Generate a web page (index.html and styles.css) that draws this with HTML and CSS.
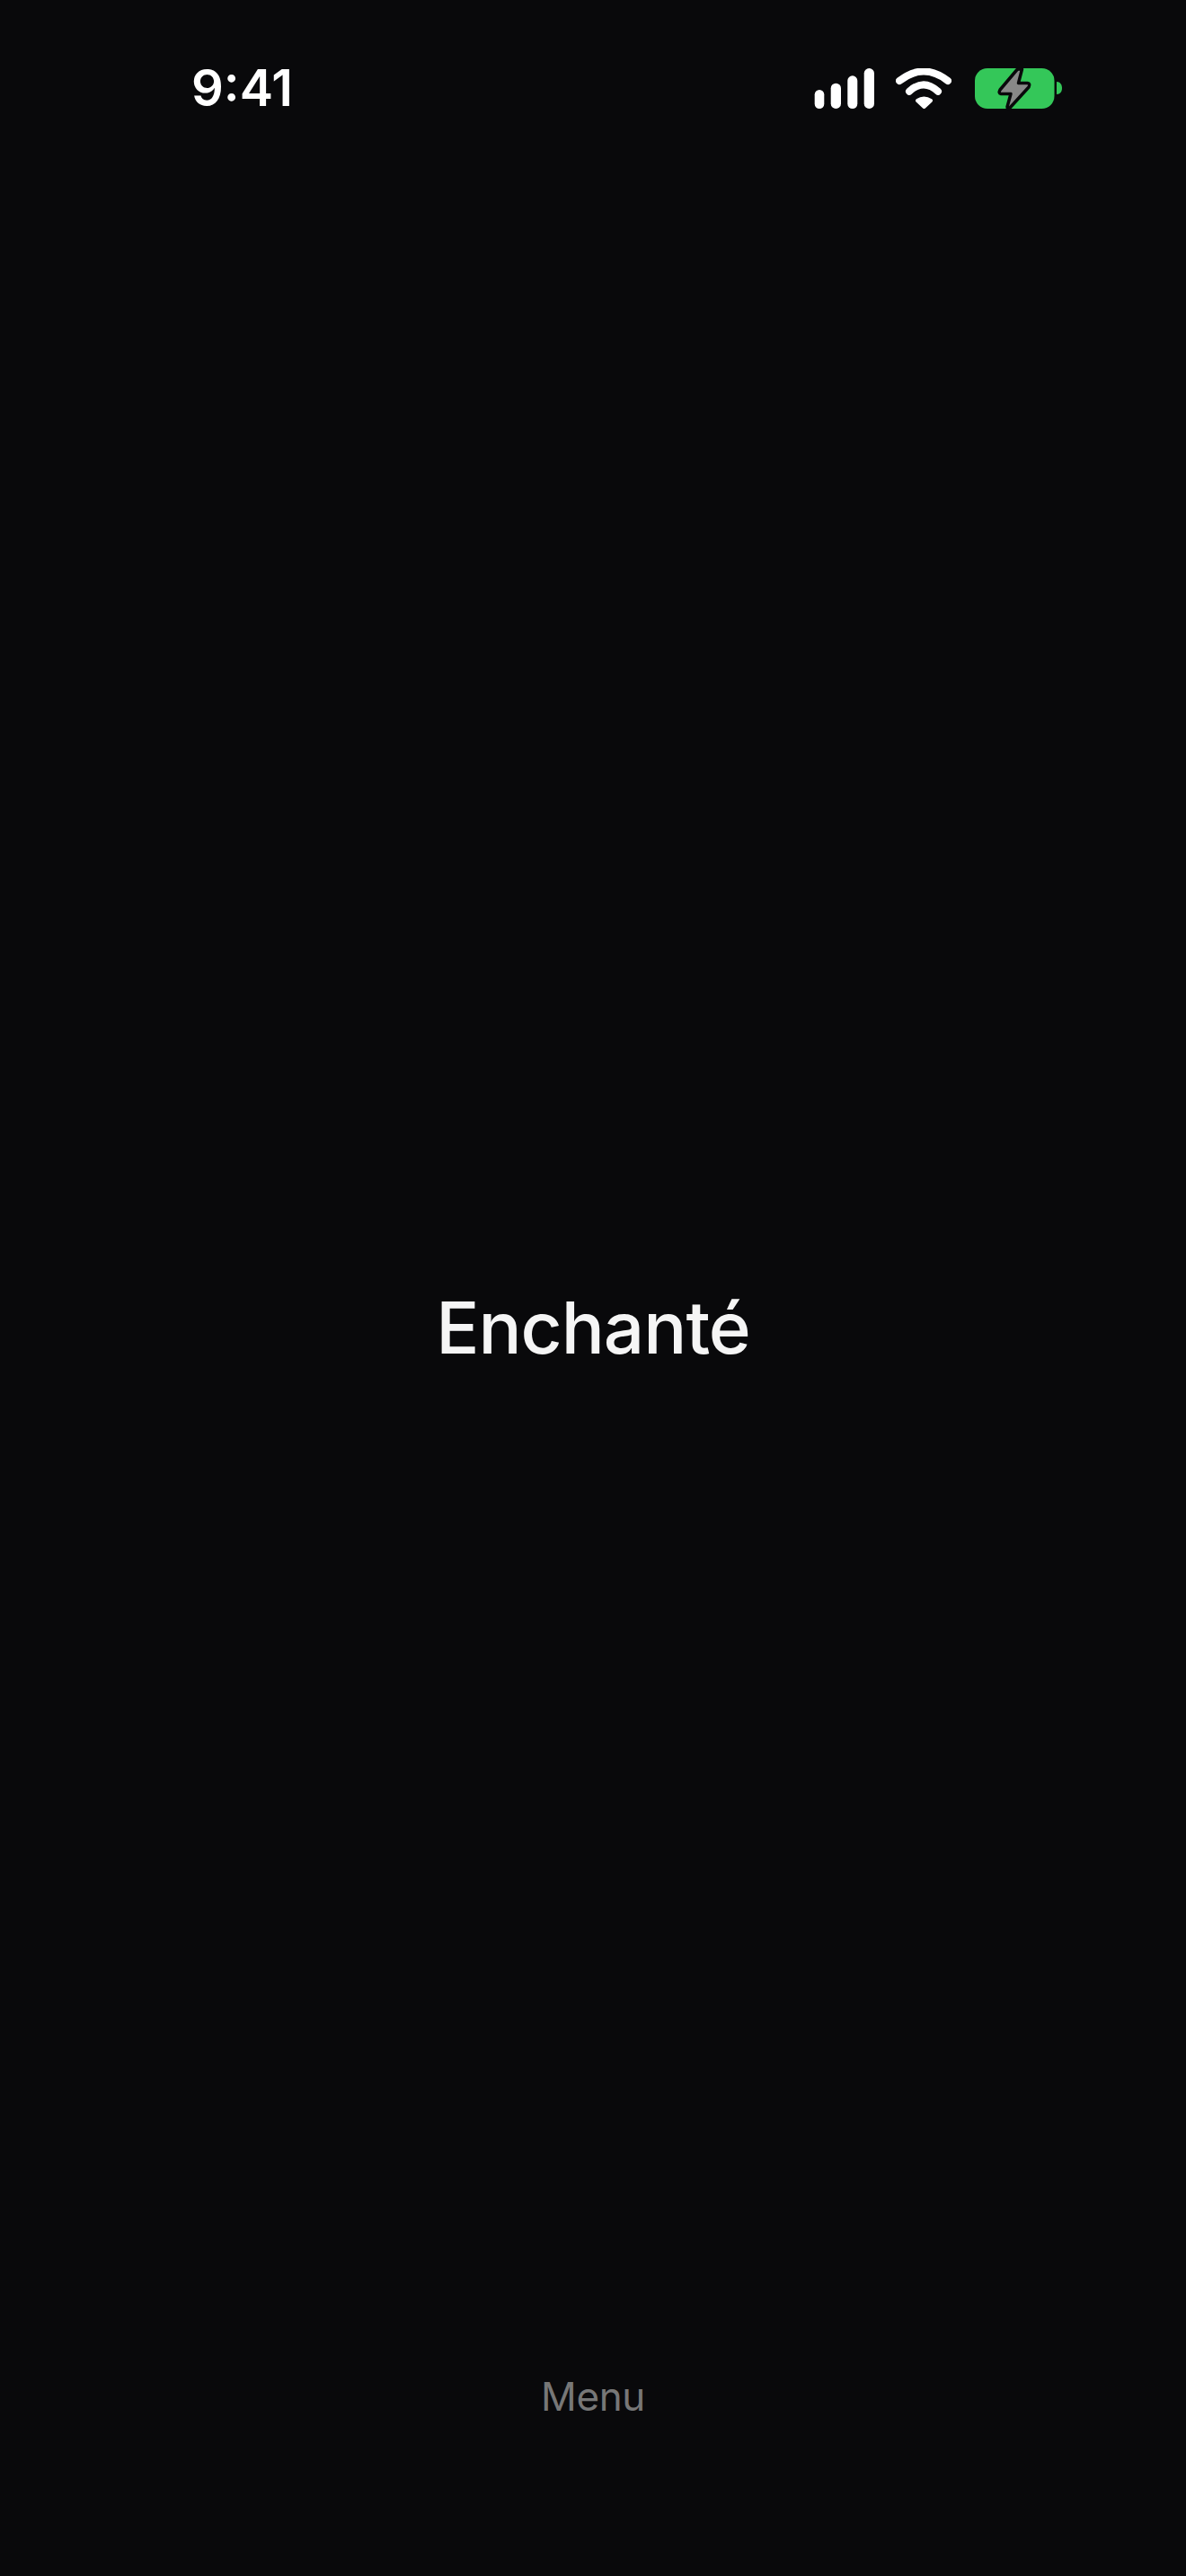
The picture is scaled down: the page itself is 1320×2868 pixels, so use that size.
FILE: index.html
```html
<!DOCTYPE html>
<html lang="en">

<head>
  <meta charset="UTF-8" />
  <meta name="viewport" content="width=device-width, initial-scale=1.0" />
  <title>Enchanté</title>
  <link rel="stylesheet" href="styles.css">
</head>

<body>
  <div class="screen">
    <div class="status-bar">
      <span class="time">9:41</span>
      <div class="status-icons">
        <svg class="icon-signal" width="67" height="45" viewBox="0 0 67 45">
          <rect x="0.7" y="24" width="10.6" height="21" rx="5.3" />
          <rect x="18.7" y="16.7" width="11.3" height="28.3" rx="5.6" />
          <rect x="37.3" y="8.3" width="11" height="36.7" rx="5.5" />
          <rect x="55.7" y="0" width="11.3" height="45" rx="5.6" />
        </svg>
        <svg class="icon-wifi" width="62" height="45" viewBox="0 0 62 45">
          <path class="wave" d="M4 14Q31 -7 58 14" />
          <path class="wave" d="M15 25.7Q31 11 47 25.7" />
          <path class="dot" d="M24 36Q31.3 31 39 36L31.5 43Z" />
        </svg>
        <svg class="icon-battery" width="98" height="50" viewBox="0 0 98 50">
          <rect class="cell" x="0" y="2" width="88.5" height="45" rx="14" />
          <path class="cell" d="M91 17C95 17 97 20.5 97 24C97 28 95 31 91 31Z" />
          <path class="bolt" d="M47 3.5Q49 2.5 52.5 3L48.5 18.5H58.5Q62 19 60 23L39 46Q36 48 36 45L40 30.5H29Q26 30 28 26Z" />
        </svg>
      </div>
    </div>
    <div class="main">
      <h1 class="greeting">Enchanté</h1>
    </div>
    <div class="bottom">
      <a class="menu-link" href="javascript:;">Menu</a>
    </div>
  </div>
</body>

</html>
```

FILE: styles.css
```css
* {
  margin: 0;
  padding: 0;
  box-sizing: border-box;
}

body {
  background: #09090b;
  font-family: Inter, "Liberation Sans", sans-serif;
}

.screen {
  width: 1320px;
  height: 2868px;
  display: flex;
  flex-direction: column;
}

.status-bar {
  height: 194px;
  padding: 76px 137px 0 213px;
  display: flex;
  justify-content: space-between;
  align-items: flex-start;
}

.time {
  font-size: 56px;
  font-weight: 600;
  line-height: 45px;
  color: #fff;
}

.status-icons {
  display: flex;
  align-items: flex-start;
  gap: 24px;
}

.icon-signal {
  fill: #fff;
}

.icon-wifi .wave {
  fill: none;
  stroke: #fff;
  stroke-width: 8;
  stroke-linecap: round;
}

.icon-wifi .dot {
  fill: #fff;
  stroke: #fff;
  stroke-width: 4;
  stroke-linejoin: round;
}

.icon-battery {
  margin-top: -2px;
  margin-left: 2px;
}

.icon-battery .cell {
  fill: #34c759;
}

.icon-battery .bolt {
  fill: #888;
  stroke: #09090b;
  stroke-width: 3.5;
  stroke-linejoin: round;
}

.main {
  flex: 1;
  display: flex;
  justify-content: center;
  padding-top: 1234px;
}

.greeting {
  font-size: 80px;
  font-weight: 500;
  line-height: 100px;
  letter-spacing: -1px;
  color: #f5f5f5;
}

.bottom {
  height: 227px;
  display: flex;
  justify-content: center;
}

.menu-link {
  font-size: 44px;
  line-height: 54px;
  letter-spacing: -0.4px;
  color: #777;
  text-decoration: none;
}
```
